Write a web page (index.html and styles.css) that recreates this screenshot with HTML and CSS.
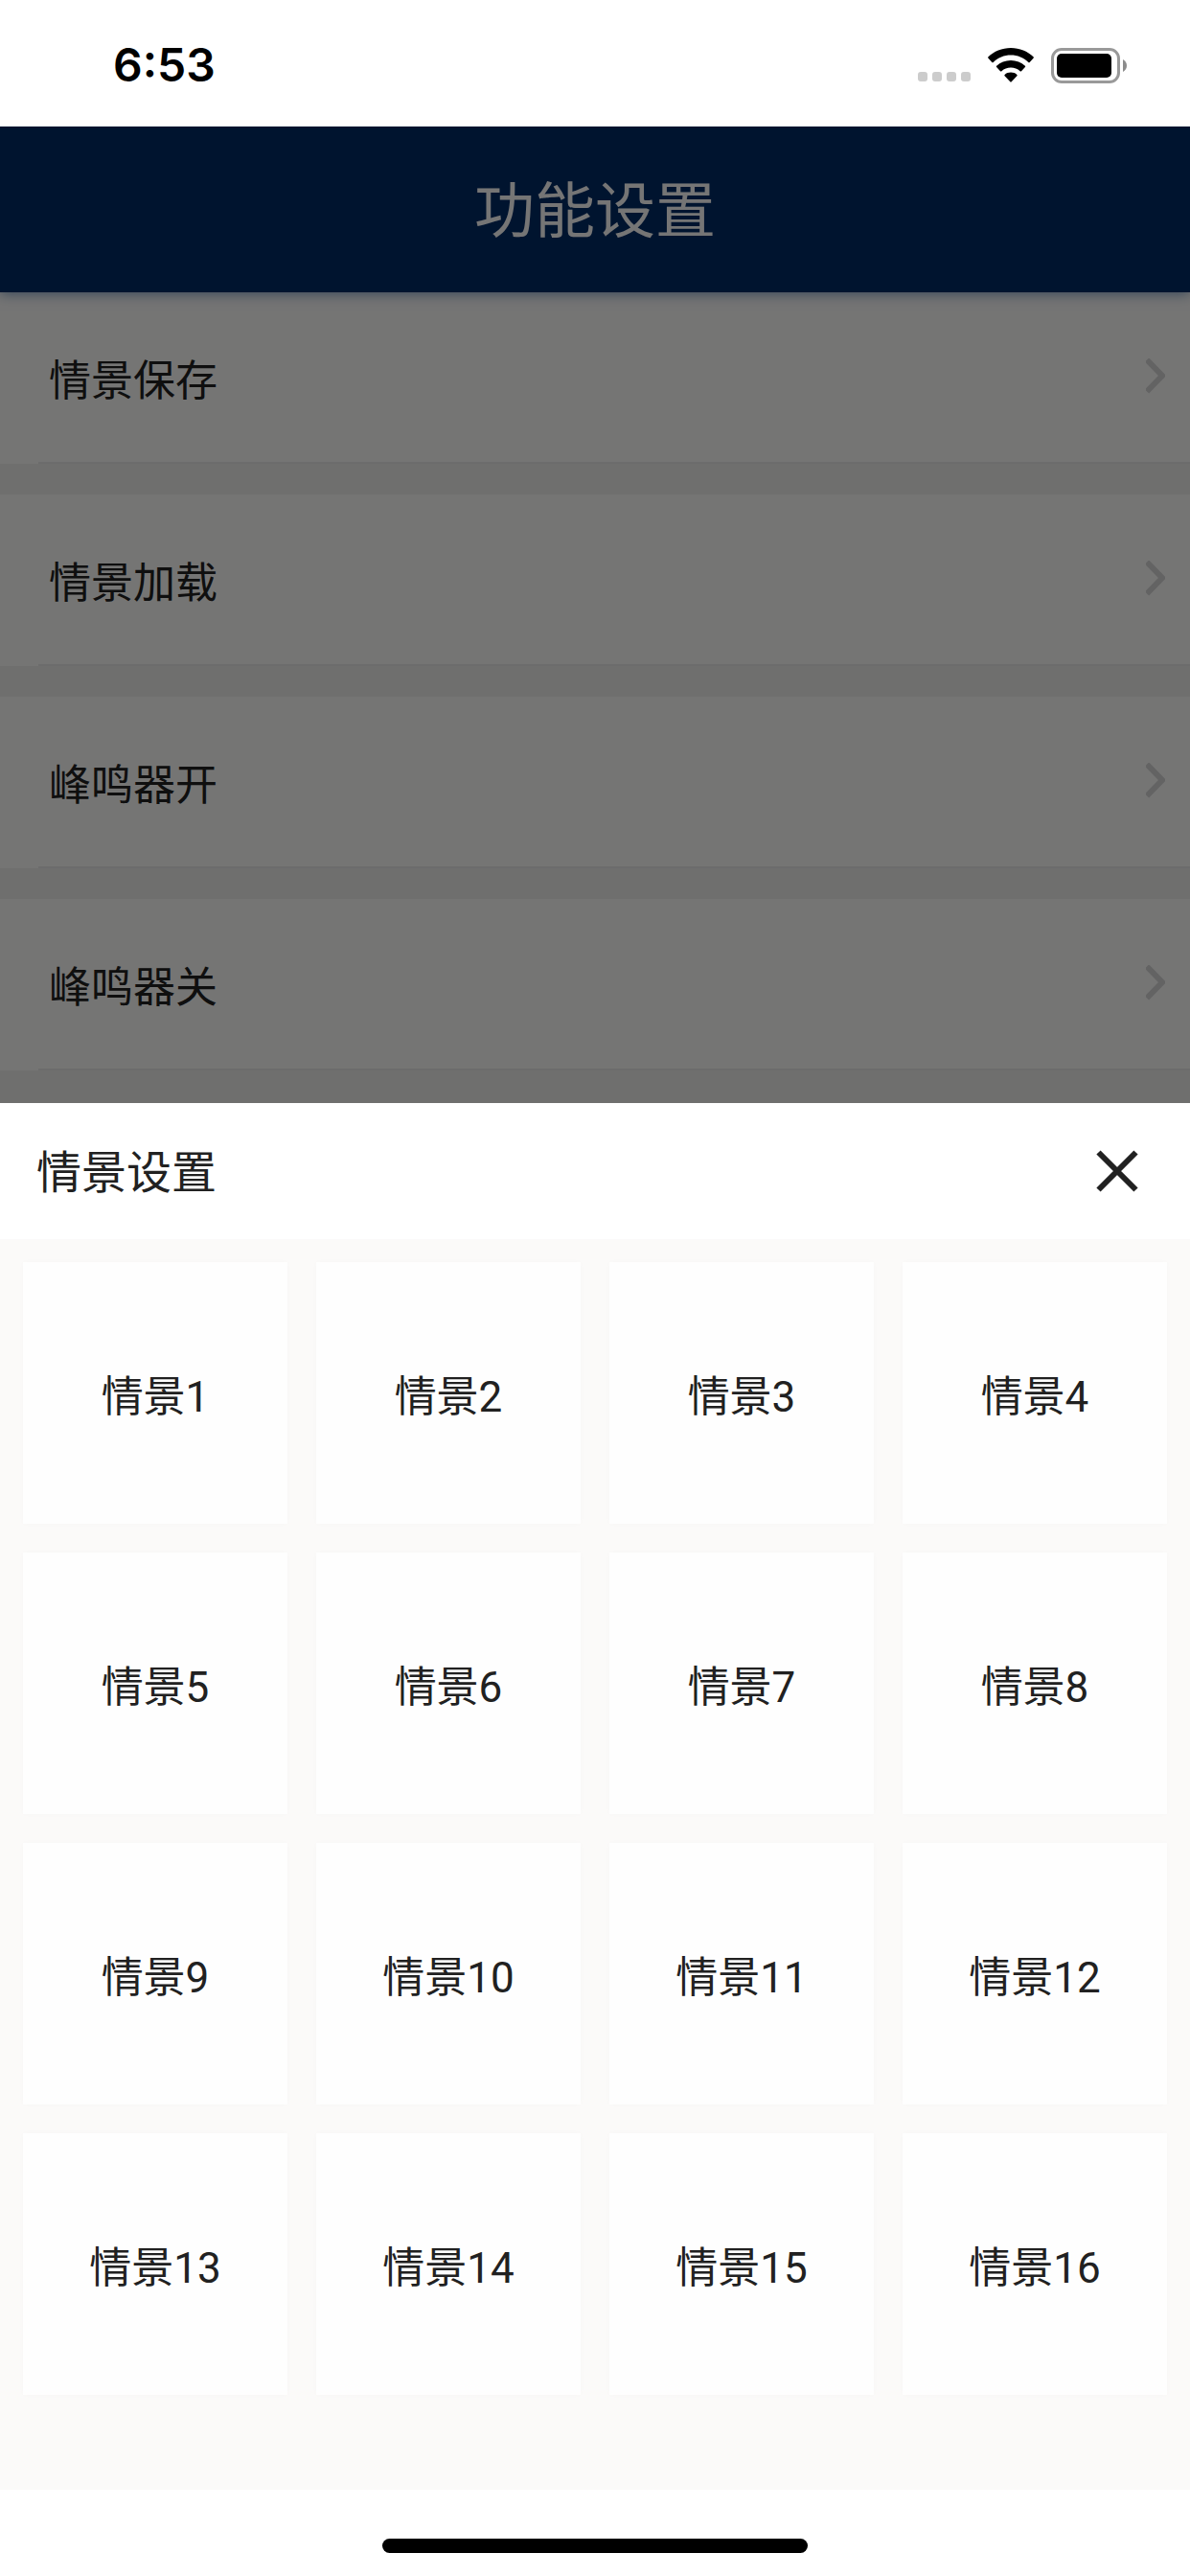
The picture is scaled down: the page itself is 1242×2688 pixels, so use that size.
FILE: index.html
```html
<!DOCTYPE html>
<html lang="zh-CN">
<head>
<meta charset="utf-8">
<meta name="viewport" content="width=device-width, initial-scale=1">
<title>功能设置</title>
<link rel="stylesheet" href="styles.css">
</head>
<body>
<div class="status-bar">
  <time class="clock">6:53</time>
  <div class="status-icons">
    <svg class="signal" width="55" height="10" viewBox="0 0 55 10" aria-hidden="true">
      <rect x="0" width="10" height="10" rx="3"/><rect x="15" width="10" height="10" rx="3"/><rect x="30" width="10" height="10" rx="3"/><rect x="45" width="10" height="10" rx="3"/>
    </svg>
    <svg class="wifi" width="48" height="36" viewBox="0 0 48 36" aria-hidden="true">
      <path d="M24 0C33.200 0 41.600 3.500 47.500 9.300Q48.200 10 47.500 10.800L43.700 14.900Q43 15.500 42.300 14.900C37.500 10.300 31 7.600 24 7.600S10.500 10.300 5.700 14.900Q5 15.500 4.300 14.900L.5 10.800Q-.2 10 .5 9.300C6.400 3.500 14.800 0 24 0Z"/>
      <path d="M24 13C29.700 13 34.900 15.100 38.900 18.700Q39.600 19.400 38.900 20.100L35 24.200Q34.300 24.800 33.600 24.200C31 21.900 27.700 20.600 24 20.600S17 21.900 14.400 24.200Q13.700 24.800 13 24.200L9.100 20.100Q8.400 19.400 9.100 18.700C13.100 15.100 18.300 13 24 13Z"/>
      <path d="M24 25.600C26.500 25.600 28.700 26.400 30.400 27.900Q31.100 28.600 30.400 29.300L24.700 35.300Q24 36 23.300 35.300L17.600 29.300Q16.900 28.600 17.600 27.900C19.300 26.400 21.500 25.600 24 25.600Z"/>
    </svg>
    <svg class="battery" width="80" height="37" viewBox="0 0 80 37" aria-hidden="true">
      <rect x="1.500" y="1.500" width="69" height="34" rx="9.500" fill="none" stroke="#999" stroke-width="3"/>
      <rect x="6" y="6" width="57" height="25" rx="5"/>
      <path d="M75 12C77.500 13.200 79 15.700 79 18.500S77.500 23.800 75 25Z" fill="#8c8c8c"/>
    </svg>
  </div>
</div>

<div class="app">
  <header class="app-header"><h1 class="app-title">功能设置</h1></header>
  <ul class="menu">
    <li><a class="menu-row" href="#save"><span>情景保存</span><svg class="chevron" viewBox="0 0 20 40" aria-hidden="true"><path d="M1 1.500L17 18L1 34.500"/></svg></a></li>
    <li><a class="menu-row" href="#load"><span>情景加载</span><svg class="chevron" viewBox="0 0 20 40" aria-hidden="true"><path d="M1 1.500L17 18L1 34.500"/></svg></a></li>
    <li><a class="menu-row" href="#buzzer-on"><span>峰鸣器开</span><svg class="chevron" viewBox="0 0 20 40" aria-hidden="true"><path d="M1 1.500L17 18L1 34.500"/></svg></a></li>
    <li><a class="menu-row" href="#buzzer-off"><span>峰鸣器关</span><svg class="chevron" viewBox="0 0 20 40" aria-hidden="true"><path d="M1 1.500L17 18L1 34.500"/></svg></a></li>
  </ul>
  <div class="scrim"></div>
  <section class="sheet" role="dialog" aria-labelledby="sheet-title">
    <div class="sheet-header">
      <h2 class="sheet-title" id="sheet-title">情景设置</h2>
      <button class="close" type="button" aria-label="关闭"><svg class="close-icon" viewBox="0 0 44 44" aria-hidden="true"><path d="M2.500 2.500L41.500 41.500M41.500 2.500L2.500 41.500"/></svg></button>
    </div>
    <div class="scenes">
      <button class="scene" type="button">情景1</button>
      <button class="scene" type="button">情景2</button>
      <button class="scene" type="button">情景3</button>
      <button class="scene" type="button">情景4</button>
      <button class="scene" type="button">情景5</button>
      <button class="scene" type="button">情景6</button>
      <button class="scene" type="button">情景7</button>
      <button class="scene" type="button">情景8</button>
      <button class="scene" type="button">情景9</button>
      <button class="scene" type="button">情景10</button>
      <button class="scene" type="button">情景11</button>
      <button class="scene" type="button">情景12</button>
      <button class="scene" type="button">情景13</button>
      <button class="scene" type="button">情景14</button>
      <button class="scene" type="button">情景15</button>
      <button class="scene" type="button">情景16</button>
    </div>
  </section>
</div>
<div class="home-area"><div class="home-indicator"></div></div>
</body>
</html>
```
FILE: styles.css
```css
* { box-sizing: border-box; }

body {
  margin: 0;
  min-height: 100vh;
  display: flex;
  flex-direction: column;
  background: #fff;
  color: #212121;
  font-family: Roboto, "Noto Sans CJK SC", sans-serif;
  font-size: 44px;
}

h1, h2, ul { margin: 0; padding: 0; font-weight: 400; }
button { border: 0; padding: 0; font: inherit; color: inherit; cursor: pointer; }

.status-bar {
  height: 132px;
  padding: 4px 65px 0 118px;
  display: flex;
  align-items: center;
  justify-content: space-between;
  color: #000;
}
.clock { font: 600 48px/60px Inter, sans-serif; }
.status-icons { display: flex; align-items: center; gap: 18px; }
.signal { fill: #ccc; align-self: flex-end; margin-bottom: 2px; }

.app { position: relative; flex: 1; overflow: hidden; background: #f2f2f0; }

.app-header {
  position: relative;
  height: 173px;
  padding-top: 4px;
  display: flex;
  align-items: center;
  justify-content: center;
  background: #002c66;
  color: #fff;
  box-shadow: 0 2px 12px rgba(0, 60, 140, 0.5);
}
.app-title { font-size: 63px; line-height: 80px; }

.menu { list-style: none; display: grid; gap: 32px; }
.menu li { padding-left: 40px; background: #fefefd; }
.menu-row {
  height: 179px;
  padding: 0 26px 0 11px;
  display: flex;
  align-items: center;
  justify-content: space-between;
  border-bottom: 2px solid #ececec;
  color: inherit;
  text-decoration: none;
}
.chevron { width: 20px; height: 40px; fill: none; stroke: #d8d8d8; stroke-width: 6; }

.scrim { position: absolute; inset: 0; background: rgba(0, 0, 0, 0.54); }

.sheet { position: absolute; left: 0; right: 0; bottom: 0; background: #fbfaf9; }
.sheet-header {
  height: 142px;
  padding: 0 54px 0 38px;
  display: flex;
  align-items: center;
  justify-content: space-between;
  background: #fff;
}
.sheet-title { padding-top: 4px; font-size: 47px; line-height: 60px; }
.close { display: flex; background: none; }
.close-icon { width: 44px; height: 44px; fill: none; stroke: #212121; stroke-width: 6; }

.scenes {
  display: grid;
  grid-template-columns: repeat(4, 1fr);
  gap: 30px;
  padding: 24px 24px 99px;
}
.scene { height: 273px; background: #fefefe; box-shadow: 0 0 6px rgba(0, 0, 0, 0.02); }

.home-area {
  height: 90px;
  padding-bottom: 24px;
  display: flex;
  align-items: flex-end;
  justify-content: center;
}
.home-indicator { width: 444px; height: 15px; border-radius: 8px; background: #000; }
```
